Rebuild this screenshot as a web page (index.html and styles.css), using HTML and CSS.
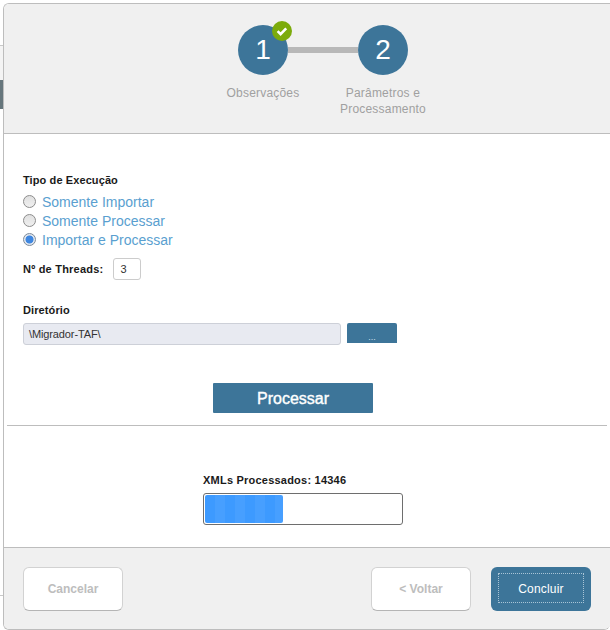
FILE: index.html
```html
<!DOCTYPE html>
<html lang="pt-BR">
<head>
<meta charset="utf-8">
<title>Migrador TAF</title>
<link rel="stylesheet" href="styles.css">
</head>
<body>
<div class="backdrop-top"></div>
<div class="backdrop-bar"></div>
<div class="backdrop-bottom"></div>
<main class="modal">
  <header class="wizard">
    <div class="steps">
      <div class="step">
        <div class="circle">1
          <svg class="badge" width="20" height="20" viewBox="0 0 20 20" aria-hidden="true">
            <circle cx="10" cy="10" r="10" fill="#7cab0c"/>
            <path d="M5.6 10.2l3 3 5.6-5.8" fill="none" stroke="#fff" stroke-width="2.6"/>
          </svg>
        </div>
        <div class="step-label">Observações</div>
      </div>
      <div class="connector"></div>
      <div class="step">
        <div class="circle">2</div>
        <div class="step-label">Parâmetros e<br>Processamento</div>
      </div>
    </div>
  </header>
  <section class="content">
    <div class="form">
      <div class="label">Tipo de Execução</div>
      <div class="radios">
        <label class="radio"><span class="dot"></span>Somente Importar</label>
        <label class="radio"><span class="dot"></span>Somente Processar</label>
        <label class="radio"><span class="dot dot-on"></span>Importar e Processar</label>
      </div>
      <div class="threads">
        <span class="label label-wide">Nº de Threads:</span>
        <div class="thread-input">3</div>
      </div>
      <div class="label dir-label">Diretório</div>
      <div class="dir-row">
        <div class="dir-input">\Migrador-TAF\</div>
        <div class="dir-btn">...</div>
      </div>
      <div class="process-row"><div class="process-btn">Processar</div></div>
    </div>
    <div class="rule"></div>
    <div class="progress-area">
      <div class="label label-wide">XMLs Processados: 14346</div>
      <div class="progress"><div class="progress-fill"></div></div>
    </div>
  </section>
  <footer class="actions">
    <div class="btn btn-off">Cancelar</div>
    <div class="actions-right">
      <div class="btn btn-off">&lt; Voltar</div>
      <div class="btn btn-main"><span class="focus">Concluir</span></div>
    </div>
  </footer>
</main>
</body>
</html>
```
FILE: styles.css
```css
* { box-sizing: border-box; }
html, body { margin: 0; height: 630px; overflow: hidden; background: #fff; }
body { font-family: "Liberation Sans", Arial, sans-serif; position: relative; padding: 3px 0 0 3px; }
.backdrop-top { position: absolute; left: 0; top: 45px; width: 3px; height: 35px; background: #f4f4f4; border-top: 1px solid #c8c8c8; }
.backdrop-bottom { position: absolute; left: 0; top: 595px; width: 3px; height: 1px; background: #c8c8c8; }
.backdrop-bar { position: absolute; left: 0; top: 80px; width: 3px; height: 29px; background: #66767c; }

.modal { width: 607px; height: 627px; display: flex; flex-direction: column; background: #fff;
  border: 1px solid #bdbdbd; border-right: 0; border-radius: 6px 0 6px 6px; overflow: hidden; }

.wizard { height: 130px; flex: none; background: #f0f0f0; border-bottom: 1px solid #bdbdbd; }
.steps { display: flex; padding: 21px 0 0 234px; }
.step { width: 50px; display: flex; flex-direction: column; align-items: center; }
.circle { position: relative; width: 50px; height: 50px; flex: none; border-radius: 50%; background: #3d7599;
  color: #fff; font-size: 28px; line-height: 50px; text-align: center; }
.badge { position: absolute; left: 34px; top: -4px; }
.connector { width: 70px; height: 6px; margin-top: 22px; background: #b8b8b8; }
.step-label { white-space: nowrap; margin-top: 10px; font-size: 12px; line-height: 16px; letter-spacing: .2px;
  color: #a0a0a0; text-align: center; }

.content { flex: 1; display: flex; flex-direction: column; }
.form { padding: 39px 0 0 19px; }
.label { font-size: 11px; font-weight: 700; line-height: 14px; color: #1a1a1a; letter-spacing: .1px; }
.label-wide { letter-spacing: .22px; }
.radios { display: flex; flex-direction: column; margin-top: 5px; }
.radio { display: flex; align-items: center; height: 19px; font-size: 14px; color: #5a9fd0; }
.dot { width: 13px; height: 13px; margin-right: 6px; border-radius: 50%; border: 1px solid #8c8c8c;
  background: linear-gradient(#e0e0e0, #f0f0f0); }
.dot-on { background: radial-gradient(circle, #3f87e0 0 3.6px, #dfe6ef 4.4px); border-color: #7d8a99; }
.threads { display: flex; align-items: center; margin-top: 9px; gap: 10px; }
.thread-input { width: 28px; height: 22px; padding-left: 6px; border: 1px solid #ccc; border-radius: 3px;
  font-size: 11px; line-height: 20px; color: #333; background: #fff; }
.dir-label { margin-top: 23px; }
.dir-row { display: flex; align-items: flex-start; gap: 6px; margin-top: 6px; }
.dir-input { width: 318px; height: 22px; padding-left: 5px; border: 1px solid #cdd0d8; border-radius: 3px;
  background: #e8eaf1; font-size: 11px; letter-spacing: -.12px; line-height: 20px; color: #333; }
.dir-btn { width: 50px; height: 20px; background: #3d7599; border-radius: 2px 2px 0 0; color: #cfe0ea;
  font-size: 9px; line-height: 29px; text-align: center; overflow: hidden; }
.process-row { display: flex; margin: 38px 0 0 190px; }
.process-btn { width: 160px; height: 30px; background: #3d7599; border-radius: 1px; color: #fff; font-size: 16px;
  -webkit-text-stroke: .4px #fff; line-height: 32px; text-align: center; }
.rule { height: 1px; margin: 12px 0 0 3px; width: 600px; background: #bdbdbd; }
.progress-area { padding: 47px 0 0 199px; }
.progress { width: 200px; height: 32px; margin-top: 6px; padding: 1px; border: 1px solid #6e6e6e; border-radius: 3px; background: #fff; }
.progress-fill { width: 78px; height: 100%; border-radius: 2px;
  background: repeating-linear-gradient(90deg, #3d9aff 0 10px, #479fff 10px 20px); }

.actions { height: 82px; flex: none; display: flex; justify-content: space-between; padding: 19px 19px 0 19px;
  background: #f0f0f0; border-top: 1px solid #bdbdbd; }
.actions-right { display: flex; gap: 20px; }
.btn { width: 100px; height: 44px; border-radius: 6px; font-size: 12px; display: flex; align-items: center; justify-content: center; }
.btn-off { background: #fff; border: 1px solid #d2d2d2; border-bottom-color: #b5b5b5; color: #bdbdbd; font-weight: 700; }
.btn-main { background: #3d7599; color: #fff; padding: 6px 7px 8px; letter-spacing: .2px; }
.focus { width: 100%; height: 100%; display: flex; align-items: center; justify-content: center;
  padding-top: 2px; border: 1px dotted #a9c4d6; }
```
